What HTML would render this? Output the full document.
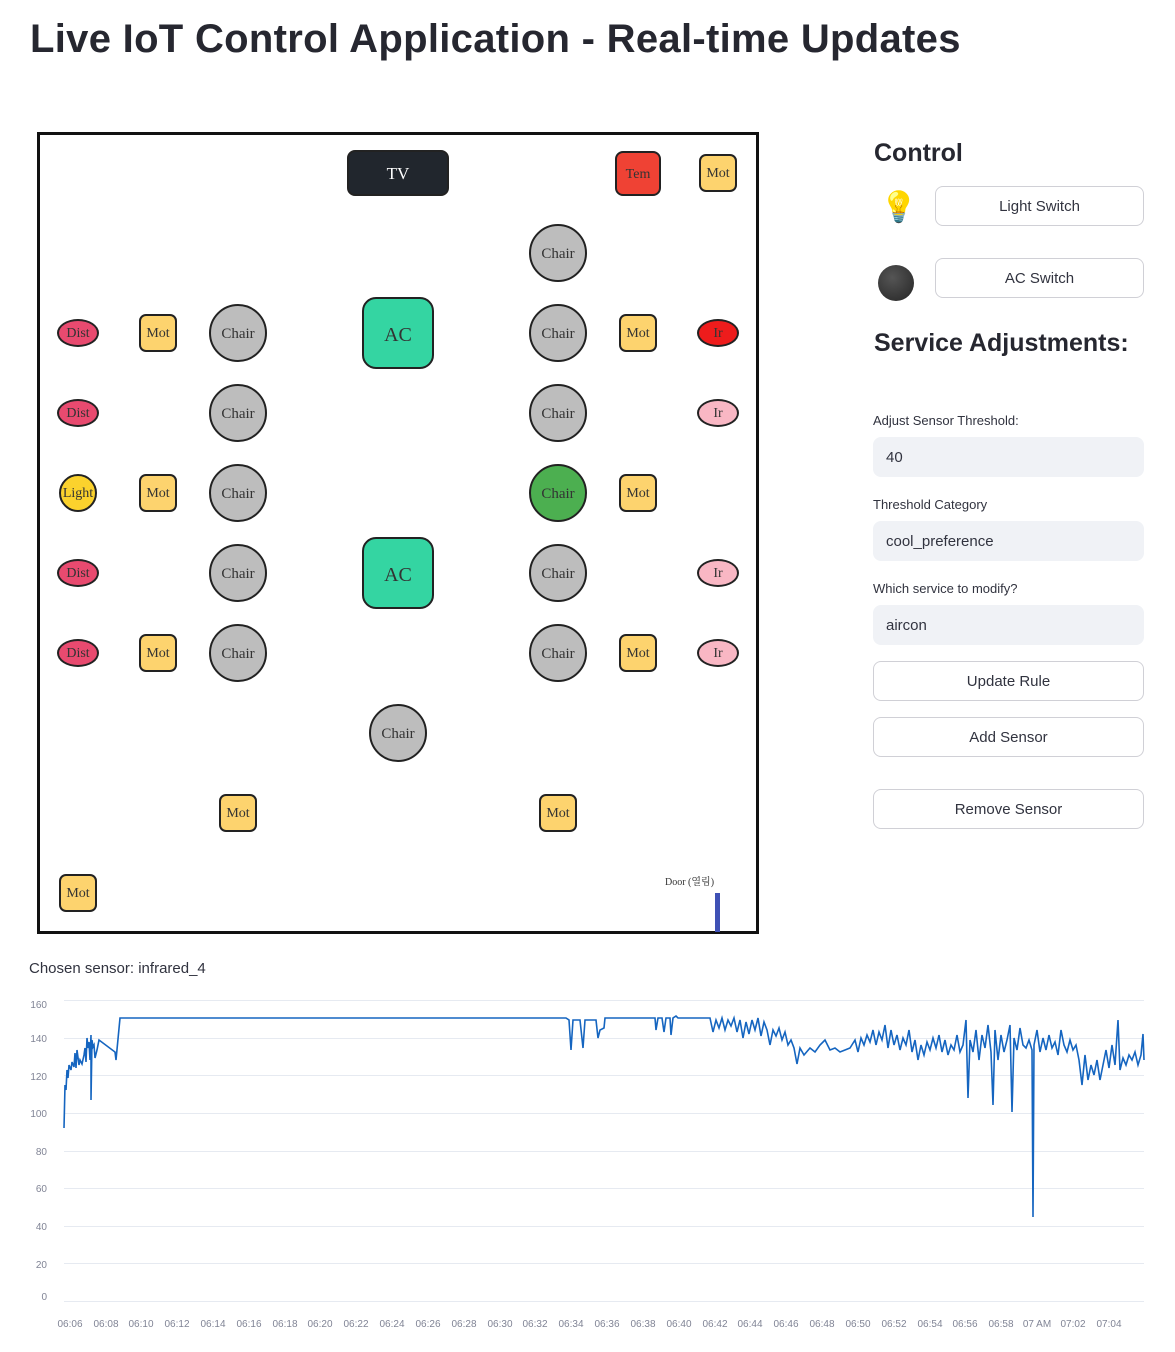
<!DOCTYPE html>
<html><head><meta charset="utf-8"><style>
body{margin:0;background:#fff;font-family:"Liberation Sans","Noto Sans CJK KR",sans-serif;color:#31333f;}
.a{position:absolute;box-sizing:border-box;display:flex;align-items:center;justify-content:center;font-family:"Liberation Serif","Noto Serif CJK SC",serif;color:#333;border:2px solid #222;padding-top:2px;}
h1{position:absolute;left:30px;top:17px;margin:0;font-size:40px;font-weight:bold;color:#262730;letter-spacing:0.3px;}
.h2{position:absolute;left:874px;font-size:25px;font-weight:bold;color:#262730;}
.btn{position:absolute;box-sizing:border-box;border:1px solid #d0d0d6;border-radius:8px;background:#fff;display:flex;align-items:center;justify-content:center;font-size:15px;color:#31333f;}
.lbl{position:absolute;left:873px;font-size:13px;color:#31333f;}
.inp{position:absolute;left:873px;width:271px;height:40px;background:#f0f2f6;border-radius:8px;box-sizing:border-box;padding-left:13px;display:flex;align-items:center;font-size:15px;}
.ch{width:58px;height:58px;border-radius:50%;background:#bdbdbd;font-size:15px;}
.mot{width:38px;height:38px;border-radius:7px;background:#fdd36e;font-size:14px;}
.dist{width:42px;height:28px;border-radius:50%;background:#e84a6f;font-size:14px;}
.ir{width:42px;height:28px;border-radius:50%;background:#f9b7c4;font-size:14px;}
.ac{width:72px;height:72px;border-radius:14px;background:#34d5a2;font-size:20px;padding-top:4px;}
</style></head><body>
<h1>Live IoT Control Application - Real-time Updates</h1>
<div style="position:absolute;left:37px;top:132px;width:722px;height:802px;border:3px solid #111;box-sizing:border-box"></div>
<div class="a" style="left:347px;top:150px;width:102px;height:46px;border-radius:8px;background:#21262d;color:#fff;font-size:17px">TV</div>
<div class="a" style="left:615px;top:151px;width:46px;height:45px;border-radius:8px;background:#ef4234;font-size:14px">Tem</div>
<div class="a mot" style="left:699px;top:154px">Mot</div>
<div class="a ch" style="left:529px;top:224px">Chair</div>
<div class="a dist" style="left:57px;top:319px">Dist</div>
<div class="a mot" style="left:139px;top:314px">Mot</div>
<div class="a ch" style="left:209px;top:304px">Chair</div>
<div class="a ac" style="left:362px;top:297px">AC</div>
<div class="a ch" style="left:529px;top:304px">Chair</div>
<div class="a mot" style="left:619px;top:314px">Mot</div>
<div class="a ir" style="left:697px;top:319px;background:#ee1c1c">Ir</div>
<div class="a dist" style="left:57px;top:399px">Dist</div>
<div class="a ch" style="left:209px;top:384px">Chair</div>
<div class="a ch" style="left:529px;top:384px">Chair</div>
<div class="a ir" style="left:697px;top:399px">Ir</div>
<div class="a" style="left:59px;top:474px;width:38px;height:38px;border-radius:50%;background:#fbd22d;font-size:14px">Light</div>
<div class="a mot" style="left:139px;top:474px">Mot</div>
<div class="a ch" style="left:209px;top:464px">Chair</div>
<div class="a ch" style="left:529px;top:464px;background:#4caf50">Chair</div>
<div class="a mot" style="left:619px;top:474px">Mot</div>
<div class="a dist" style="left:57px;top:559px">Dist</div>
<div class="a ch" style="left:209px;top:544px">Chair</div>
<div class="a ac" style="left:362px;top:537px">AC</div>
<div class="a ch" style="left:529px;top:544px">Chair</div>
<div class="a ir" style="left:697px;top:559px">Ir</div>
<div class="a dist" style="left:57px;top:639px">Dist</div>
<div class="a mot" style="left:139px;top:634px">Mot</div>
<div class="a ch" style="left:209px;top:624px">Chair</div>
<div class="a ch" style="left:529px;top:624px">Chair</div>
<div class="a mot" style="left:619px;top:634px">Mot</div>
<div class="a ir" style="left:697px;top:639px">Ir</div>
<div class="a ch" style="left:369px;top:704px">Chair</div>
<div class="a mot" style="left:219px;top:794px">Mot</div>
<div class="a mot" style="left:539px;top:794px">Mot</div>
<div class="a mot" style="left:59px;top:874px">Mot</div>
<div style="position:absolute;left:665px;top:873px;font-size:10px;font-family:'Liberation Serif','Noto Serif CJK KR',serif;color:#333">Door (열림)</div>
<div style="position:absolute;left:715px;top:893px;width:5px;height:39px;background:#3f51b5"></div>

<div class="h2" style="top:139px">Control</div>
<div style="position:absolute;left:880px;top:190px;font-size:30px;font-family:'Noto Color Emoji',sans-serif">💡</div>
<div style="position:absolute;left:878px;top:265px;width:36px;height:36px;border-radius:50%;background:radial-gradient(circle at 40% 35%,#555,#333 70%,#222)"></div>
<div class="btn" style="left:935px;top:186px;width:209px;height:40px">Light Switch</div>
<div class="btn" style="left:935px;top:258px;width:209px;height:40px">AC Switch</div>
<div class="h2" style="top:329px">Service Adjustments:</div>
<div class="lbl" style="top:413px">Adjust Sensor Threshold:</div>
<div class="inp" style="top:437px">40</div>
<div class="lbl" style="top:497px">Threshold Category</div>
<div class="inp" style="top:521px">cool_preference</div>
<div class="lbl" style="top:581px">Which service to modify?</div>
<div class="inp" style="top:605px">aircon</div>
<div class="btn" style="left:873px;top:661px;width:271px;height:40px">Update Rule</div>
<div class="btn" style="left:873px;top:717px;width:271px;height:40px">Add Sensor</div>
<div class="btn" style="left:873px;top:789px;width:271px;height:40px">Remove Sensor</div>

<div style="position:absolute;left:29px;top:960px;font-size:15px">Chosen sensor: infrared_4</div>
<svg style="position:absolute;left:0;top:990px" width="1175" height="362" font-family="Liberation Sans,sans-serif" font-size="10" fill="#808495">
<g stroke="#e6eaf1" stroke-width="1">
<line x1="64" x2="1144" y1="10.5" y2="10.5"/><line x1="64" x2="1144" y1="48.5" y2="48.5"/><line x1="64" x2="1144" y1="85.5" y2="85.5"/><line x1="64" x2="1144" y1="123.5" y2="123.5"/><line x1="64" x2="1144" y1="161.5" y2="161.5"/><line x1="64" x2="1144" y1="198.5" y2="198.5"/><line x1="64" x2="1144" y1="236.5" y2="236.5"/><line x1="64" x2="1144" y1="273.5" y2="273.5"/><line x1="64" x2="1144" y1="311.5" y2="311.5"/></g>
<g text-anchor="end"><text x="47" y="18">160</text><text x="47" y="52">140</text><text x="47" y="90">120</text><text x="47" y="127">100</text><text x="47" y="165">80</text><text x="47" y="202">60</text><text x="47" y="240">40</text><text x="47" y="278">20</text><text x="47" y="310">0</text></g>
<g text-anchor="middle">
<text x="70" y="337">06:06</text><text x="106" y="337">06:08</text><text x="141" y="337">06:10</text><text x="177" y="337">06:12</text><text x="213" y="337">06:14</text><text x="249" y="337">06:16</text><text x="285" y="337">06:18</text><text x="320" y="337">06:20</text><text x="356" y="337">06:22</text><text x="392" y="337">06:24</text><text x="428" y="337">06:26</text><text x="464" y="337">06:28</text><text x="500" y="337">06:30</text><text x="535" y="337">06:32</text><text x="571" y="337">06:34</text><text x="607" y="337">06:36</text><text x="643" y="337">06:38</text><text x="679" y="337">06:40</text><text x="715" y="337">06:42</text><text x="750" y="337">06:44</text><text x="786" y="337">06:46</text><text x="822" y="337">06:48</text><text x="858" y="337">06:50</text><text x="894" y="337">06:52</text><text x="930" y="337">06:54</text><text x="965" y="337">06:56</text><text x="1001" y="337">06:58</text><text x="1037" y="337">07 AM</text><text x="1073" y="337">07:02</text><text x="1109" y="337">07:04</text></g>
<polyline fill="none" stroke="#1565c0" stroke-width="1.6" points="64,138 65,95 66,100 67,80 68,88 69,75 71,80 72,72 74,77 75,63 76,78 77,60 79,75 80,70 82,74 84,65 85,58 86,72 87,48 88,58 89,52 90,70 91,45 91,110 92,50 93,57 94,55 95,68 97,60 99,50 115,62 116,70 120,28 566,28 569,30 571,60 573,30 580,30 583,58 585,30 596,30 598,48 600,40 604,38 605,28 655,28 656,40 658,28 662,28 664,42 666,28 670,28 671,45 673,28 676,26 678,28 710,28 713,42 716,30 719,38 722,28 725,40 728,30 731,36 734,28 737,42 740,30 743,48 746,32 749,44 752,30 755,40 758,28 761,46 764,32 767,40 770,55 773,40 776,46 779,38 782,50 785,42 788,55 791,50 794,58 797,74 800,58 804,65 810,58 815,62 820,55 825,50 830,60 835,58 840,62 845,60 850,58 855,50 858,62 861,48 864,55 867,45 870,52 873,40 876,55 879,42 882,50 885,35 888,58 891,40 894,55 897,45 900,60 903,48 906,55 909,40 912,62 915,50 918,70 921,55 924,65 927,52 930,60 933,48 936,58 939,45 942,62 945,50 948,65 951,55 954,60 957,45 960,62 963,55 966,30 968,108 970,50 973,62 976,40 979,70 982,45 985,58 988,35 991,62 993,115 995,40 998,70 1001,45 1004,62 1007,50 1010,35 1012,122 1014,48 1017,60 1020,38 1023,55 1026,58 1029,50 1032,60 1033,227 1034,55 1037,40 1040,62 1043,48 1046,60 1049,45 1052,58 1055,52 1058,65 1061,40 1064,55 1067,62 1070,50 1073,60 1076,55 1079,70 1082,95 1085,65 1088,90 1091,75 1094,85 1097,70 1100,90 1103,75 1106,60 1109,78 1112,55 1115,75 1118,30 1120,80 1123,68 1126,75 1129,65 1132,70 1135,62 1138,75 1141,65 1143,44 1144,70"/>
</svg>
</body></html>
